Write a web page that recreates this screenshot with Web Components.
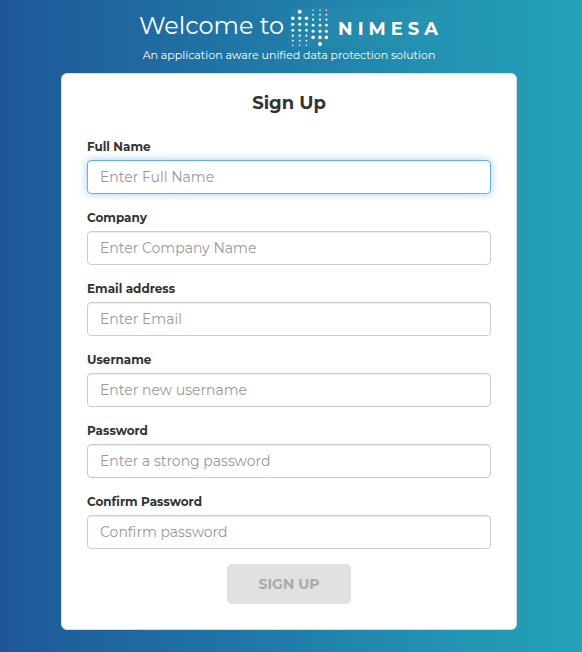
<!DOCTYPE html>
<html lang="en">
<head>
<meta charset="utf-8">
<meta name="viewport" content="width=device-width, initial-scale=1">
<title>Nimesa Sign Up</title>
<style>
  html { min-height: 100%; background: linear-gradient(to right, #1e5799 0%, #2079a7 45%, #2394b3 78%, #23a2b8 100%); }
  body { margin: 0; font-family: Montserrat, Inter, "Open Sans", sans-serif; color: #333; }
</style>
</head>
<body>
<sign-up-page></sign-up-page>
<script>
const define = (name, html, setup) => {
  const template = document.createElement('template');
  template.innerHTML = '<style>*{box-sizing:border-box}</style>' + html;
  customElements.define(name, class extends HTMLElement {
    constructor() {
      super();
      this.attachShadow({ mode: 'open' }).append(template.content.cloneNode(true));
    }
    connectedCallback() { if (setup) setup(this, this.shadowRoot); }
  });
};

define('nimesa-logo', `
  <style>
    :host { display: flex; align-items: center; gap: 10px; height: 40px; color: #fff; background: rgba(60,170,180,.12); }
    svg { display: block; width: 38px; height: 40px; fill: currentColor; }
    span { padding-top: 1px; font-size: 18px; line-height: 24px; font-weight: 700; letter-spacing: 5px; margin-right: -4px; }
  </style>
  <svg viewBox="290 8 38 40" aria-hidden="true"></svg>
  <span>NIMESA</span>`,
  (host, root) => {
    const rising = [[18.3, 1.8], [24.3, 1.5], [30.3, 1.4], [35.7, 1.1], [40.7, .9], [45.2, .7]];
    const falling = [[10.3, .7], [14.7, .9], [19.7, 1.1], [25.2, 1.4], [31.2, 1.5], [37.4, 1.8]];
    const dots = [[299.7, 11.7, 2], [320, 44, 2]];
    for (const x of [292.8, 299.7, 306.4]) for (const [y, r] of rising) dots.push([x, y, r]);
    for (const x of [313.1, 320, 326.4]) for (const [y, r] of falling) dots.push([x, y, r]);
    root.querySelector('svg').innerHTML =
      dots.map(([x, y, r]) => `<circle cx="${x}" cy="${y}" r="${r}"/>`).join('');
  });

define('welcome-banner', `
  <style>
    :host { display: flex; flex-direction: column; align-items: center; color: #fff; }
    h1 { display: flex; align-items: flex-start; gap: 6px; margin: 0; font-size: 24px; line-height: 36px; font-weight: 400; white-space: nowrap; }
    p { margin: 0; font-size: 11px; line-height: 14px; }
  </style>
  <h1><span>Welcome to</span><nimesa-logo></nimesa-logo></h1>
  <p><slot></slot></p>`);

define('form-field', `
  <style>
    :host { display: block; }
    label { display: block; margin-bottom: 5px; font-size: 12px; line-height: 17px; font-weight: 700; }
    input { display: block; width: 100%; height: 34px; padding: 6px 12px; border: 1px solid #ccc; border-radius: 4px;
      background: #fff; color: #555; font: 400 14px/20px Montserrat, Inter, sans-serif; box-shadow: inset 0 1px 1px rgba(0,0,0,.075); }
    input::placeholder { color: #999; opacity: 1; }
    input:focus, :host([active]) input { outline: 0; border-color: #66afe9;
      box-shadow: inset 0 1px 1px rgba(0,0,0,.075), 0 0 8px rgba(102,175,233,.6); }
  </style>
  <label for="control"></label><input id="control">`,
  (host, root) => {
    root.querySelector('label').textContent = host.getAttribute('label');
    const input = root.querySelector('input');
    input.placeholder = host.getAttribute('hint');
    input.type = host.getAttribute('type') || 'text';
  });

define('submit-button', `
  <style>
    :host { display: block; }
    button { height: 40px; padding: 0 32px; border: 0; border-radius: 5px; background: #e1e1e1; color: #aaa;
      font: 700 14px/20px Montserrat, Inter, sans-serif; }
  </style>
  <button type="submit" disabled><slot></slot></button>`);

define('form-card', `
  <style>
    :host { display: block; padding: 17px 25px 25px; border: 1px solid #ddd; border-radius: 6px; background: #fff; }
    h2 { margin: 0 0 23px; font-size: 18px; line-height: 24px; font-weight: 700; text-align: center; }
    form { display: flex; flex-direction: column; gap: 15px; }
    ::slotted(submit-button) { align-self: center; }
  </style>
  <h2>Sign Up</h2>
  <form><slot></slot></form>`);

define('sign-up-page', `
  <style>
    :host { display: block; padding: 8px 65px 22px 61px; }
    form-card { margin-top: 11px; }
  </style>
  <welcome-banner>An application aware unified data protection solution</welcome-banner>
  <form-card>
    <form-field active label="Full Name" hint="Enter Full Name"></form-field>
    <form-field label="Company" hint="Enter Company Name"></form-field>
    <form-field label="Email address" hint="Enter Email" type="email"></form-field>
    <form-field label="Username" hint="Enter new username"></form-field>
    <form-field label="Password" hint="Enter a strong password" type="password"></form-field>
    <form-field label="Confirm Password" hint="Confirm password" type="password"></form-field>
    <submit-button>SIGN UP</submit-button>
  </form-card>`);
</script>
</body>
</html>
